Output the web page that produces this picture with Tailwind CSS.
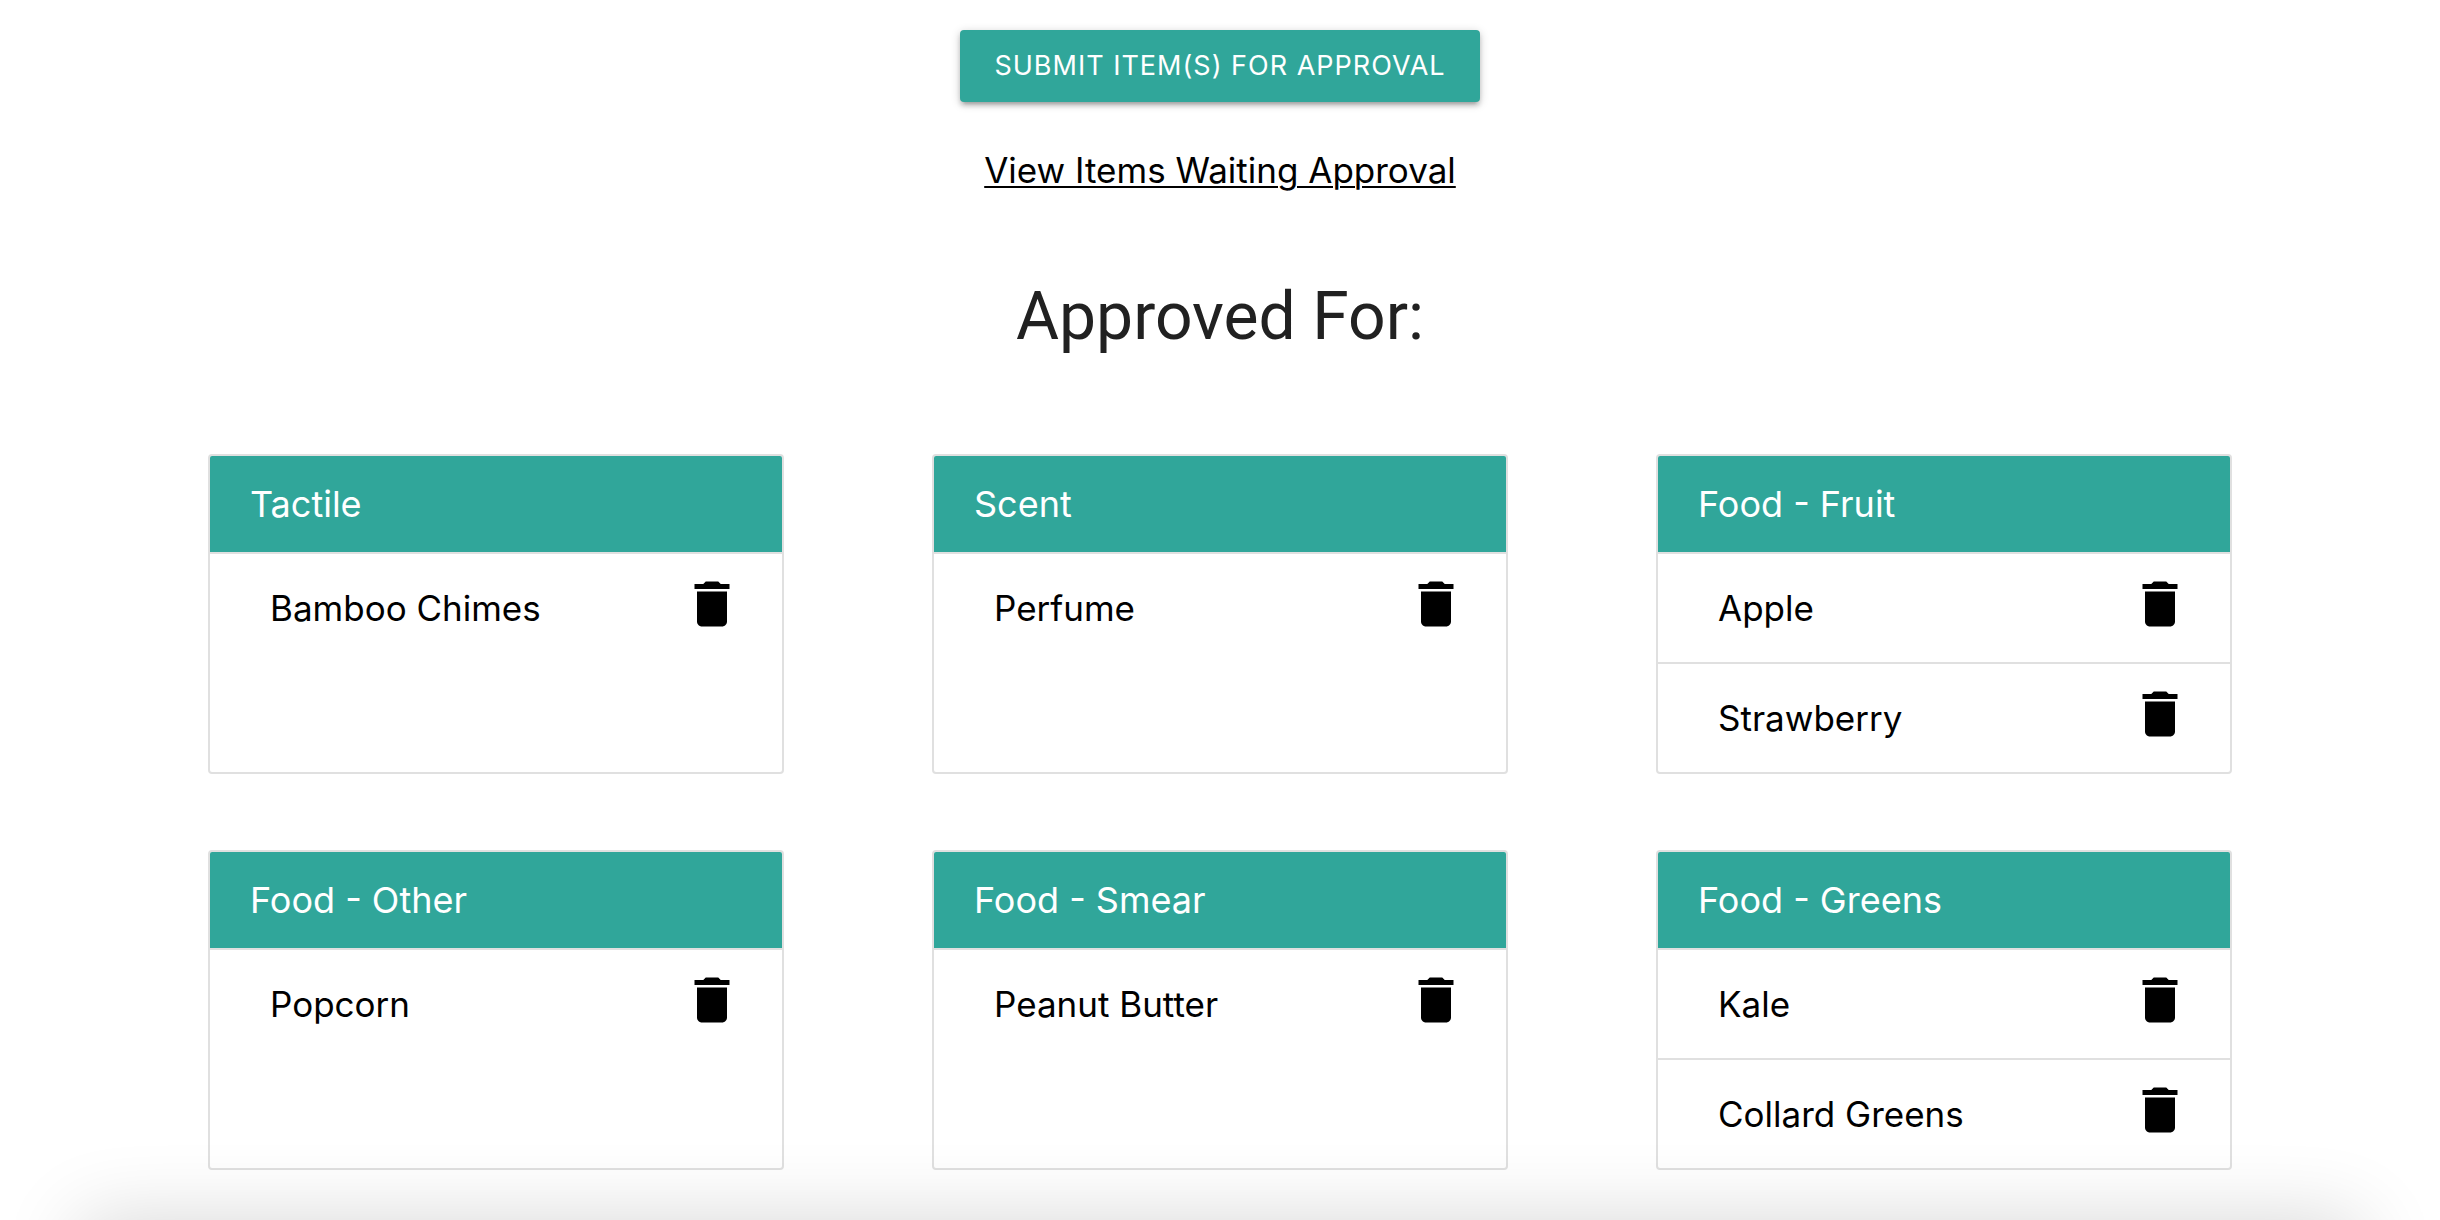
<!DOCTYPE html>
<html lang="en">
<head>
<meta charset="utf-8">
<meta name="viewport" content="width=device-width, initial-scale=1">
<title>Approved Items</title>
<script src="https://cdn.jsdelivr.net/npm/@tailwindcss/browser@4"></script>
</head>
<body class="relative min-h-screen overflow-x-hidden bg-white font-[Inter,sans-serif] text-[35px] text-black">
<svg class="hidden" aria-hidden="true">
  <symbol id="trash" viewBox="0 0 24 24"><path d="M6 19c0 1.1.9 2 2 2h8c1.1 0 2-.9 2-2V7H6v12zM19 4h-3.5l-1-1h-5l-1 1H5v2h14V4z"/></symbol>
</svg>
<main class="px-52 pt-[30px] pb-12">
  <div class="flex flex-col items-center">
    <button type="button" class="h-18 rounded-sm bg-[#30a69a] px-[34px] text-[27px] tracking-[1px] text-white uppercase shadow-[0_4px_4px_0_rgba(0,0,0,0.14),0_6px_2px_-4px_rgba(0,0,0,0.12),0_2px_10px_0_rgba(0,0,0,0.2)]">Submit Item(s) for Approval</button>
    <a href="#waiting" class="mt-10 leading-[56px] underline decoration-2 underline-offset-3">View Items Waiting Approval</a>
    <h1 class="mt-20 font-[Roboto,sans-serif] text-[66px] leading-[78px] text-[#212121]">Approved For:</h1>
  </div>
  <div class="mt-[98px] grid grid-cols-3 gap-x-37 gap-y-19">
    <section class="overflow-hidden rounded-sm border-2 border-[#e0e0e0]">
      <h2 class="border-b-2 border-[#e0e0e0] bg-[#30a69a] px-10 text-[36px] leading-[96px] text-white">Tactile</h2>
      <ul class="divide-y-2 divide-[#e0e0e0]">
        <li class="flex items-start justify-between pt-5 pr-10 pb-5 pl-[60px]"><span class="leading-[68px]">Bamboo Chimes</span><button type="button" aria-label="Delete Bamboo Chimes"><svg class="size-15"><use href="#trash"/></svg></button></li>
      </ul>
    </section>
    <section class="overflow-hidden rounded-sm border-2 border-[#e0e0e0]">
      <h2 class="border-b-2 border-[#e0e0e0] bg-[#30a69a] px-10 text-[36px] leading-[96px] text-white">Scent</h2>
      <ul class="divide-y-2 divide-[#e0e0e0]">
        <li class="flex items-start justify-between pt-5 pr-10 pb-5 pl-[60px]"><span class="leading-[68px]">Perfume</span><button type="button" aria-label="Delete Perfume"><svg class="size-15"><use href="#trash"/></svg></button></li>
      </ul>
    </section>
    <section class="overflow-hidden rounded-sm border-2 border-[#e0e0e0]">
      <h2 class="border-b-2 border-[#e0e0e0] bg-[#30a69a] px-10 text-[36px] leading-[96px] text-white">Food - Fruit</h2>
      <ul class="divide-y-2 divide-[#e0e0e0]">
        <li class="flex items-start justify-between pt-5 pr-10 pb-5 pl-[60px]"><span class="leading-[68px]">Apple</span><button type="button" aria-label="Delete Apple"><svg class="size-15"><use href="#trash"/></svg></button></li>
        <li class="flex items-start justify-between pt-5 pr-10 pb-5 pl-[60px]"><span class="leading-[68px]">Strawberry</span><button type="button" aria-label="Delete Strawberry"><svg class="size-15"><use href="#trash"/></svg></button></li>
      </ul>
    </section>
    <section class="overflow-hidden rounded-sm border-2 border-[#e0e0e0]">
      <h2 class="border-b-2 border-[#e0e0e0] bg-[#30a69a] px-10 text-[36px] leading-[96px] text-white">Food - Other</h2>
      <ul class="divide-y-2 divide-[#e0e0e0]">
        <li class="flex items-start justify-between pt-5 pr-10 pb-5 pl-[60px]"><span class="leading-[68px]">Popcorn</span><button type="button" aria-label="Delete Popcorn"><svg class="size-15"><use href="#trash"/></svg></button></li>
      </ul>
    </section>
    <section class="overflow-hidden rounded-sm border-2 border-[#e0e0e0]">
      <h2 class="border-b-2 border-[#e0e0e0] bg-[#30a69a] px-10 text-[36px] leading-[96px] text-white">Food - Smear</h2>
      <ul class="divide-y-2 divide-[#e0e0e0]">
        <li class="flex items-start justify-between pt-5 pr-10 pb-5 pl-[60px]"><span class="leading-[68px]">Peanut Butter</span><button type="button" aria-label="Delete Peanut Butter"><svg class="size-15"><use href="#trash"/></svg></button></li>
      </ul>
    </section>
    <section class="overflow-hidden rounded-sm border-2 border-[#e0e0e0]">
      <h2 class="border-b-2 border-[#e0e0e0] bg-[#30a69a] px-10 text-[36px] leading-[96px] text-white">Food - Greens</h2>
      <ul class="divide-y-2 divide-[#e0e0e0]">
        <li class="flex items-start justify-between pt-5 pr-10 pb-5 pl-[60px]"><span class="leading-[68px]">Kale</span><button type="button" aria-label="Delete Kale"><svg class="size-15"><use href="#trash"/></svg></button></li>
        <li class="flex items-start justify-between pt-5 pr-10 pb-5 pl-[60px]"><span class="leading-[68px]">Collard Greens</span><button type="button" aria-label="Delete Collard Greens"><svg class="size-15"><use href="#trash"/></svg></button></li>
      </ul>
    </section>
  </div>
</main>
<!-- Bottom sheet resting just below the window; only its shadow shows -->
<div class="pointer-events-none fixed inset-x-20 top-full h-40 shadow-[0_0_80px_0_rgba(0,0,0,0.16)]"></div>
</body>
</html>
